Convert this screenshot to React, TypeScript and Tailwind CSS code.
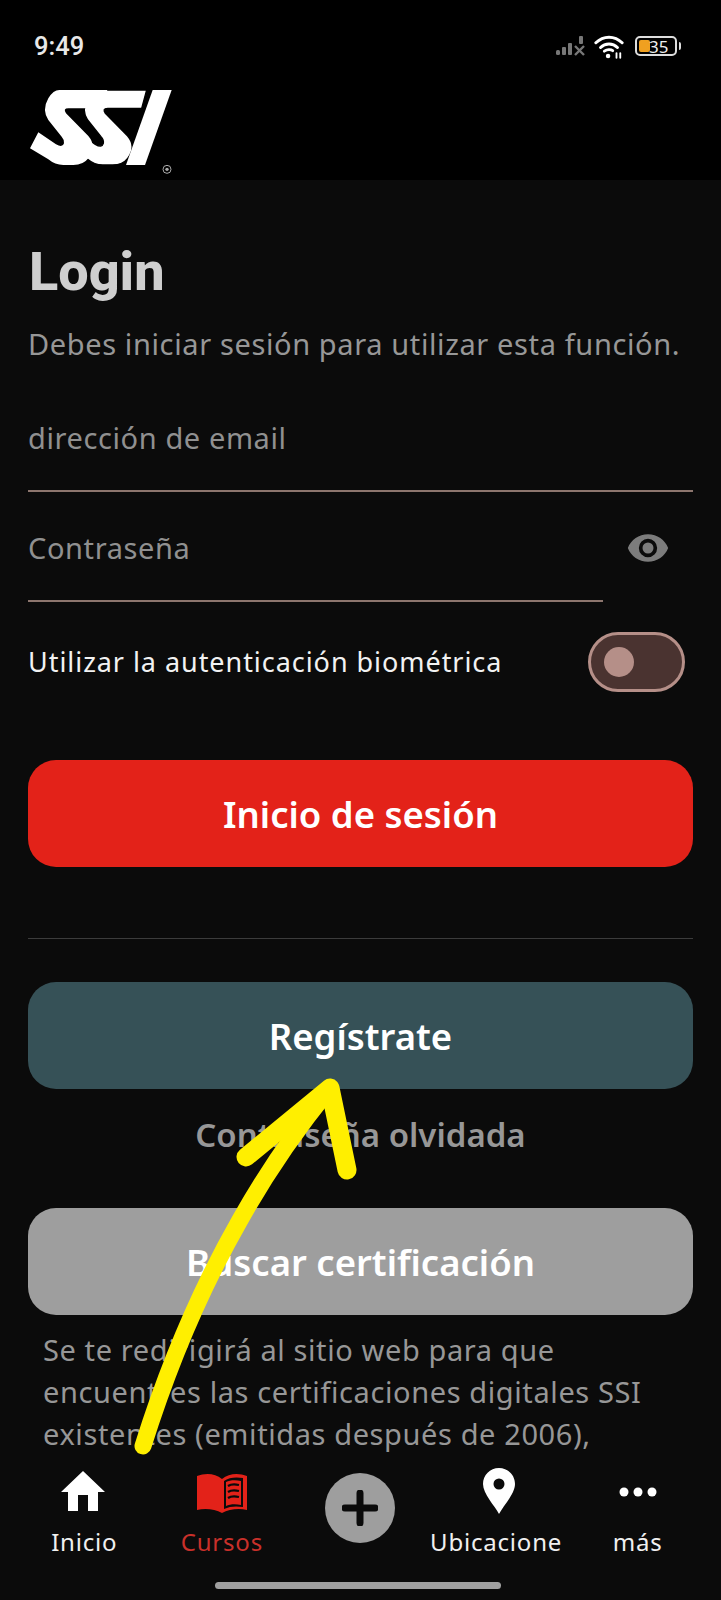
const S_PATH =
  "M118 30L262 30L247 85L145 85Q128 85 138 100L205 168Q232 200 205 235Q190 255 160 255L130 255Q105 255 85 238L30 205L55 157L108 193Q128 205 132 190Q134 180 125 170L85 120Q65 90 85 55Q100 30 118 30Z";

function SsiLogo() {
  return (
    <svg width="160" height="95" viewBox="0 0 480 285" className="absolute left-[20px] top-[80px]">
      <path d={S_PATH} fill="#fff" stroke="#000" strokeWidth="4" transform="translate(118 0)" />
      <path d={S_PATH} fill="#fff" />
      <path d="M398 30L455 30L375 255L318 255Z" fill="#fff" />
      <circle cx="441" cy="268" r="12" fill="none" stroke="#aaa" strokeWidth="3" />
      <circle cx="441" cy="268" r="5" fill="#aaa" />
    </svg>
  );
}

function StatusIcons() {
  return (
    <div className="flex items-center">
      <svg width="30" height="20" viewBox="0 0 30 20" className="mr-[9px]">
        <rect x="1" y="14" width="4" height="5" rx="1.5" fill="#777" />
        <rect x="7" y="11" width="4" height="8" rx="1" fill="#777" />
        <rect x="13" y="7" width="4" height="12" rx="1" fill="#777" />
        <rect x="24" y="0" width="4" height="8" rx="1" fill="#777" />
        <path d="M20 10L29 19M29 10L20 19" stroke="#777" strokeWidth="2.4" />
      </svg>
      <svg width="30" height="25" viewBox="0 0 32 26" fill="none" stroke="#fff" strokeLinecap="round" className="mr-[11px]">
        <path d="M2 9C10 1 22 1 30 9" strokeWidth="3.200" />
        <path d="M7 14C12 9 20 9 25 14" strokeWidth="3.200" />
        <path d="M11 18C14 16 18 16 20 17.500" strokeWidth="3" />
        <circle cx="15" cy="23" r="2.400" fill="#fff" stroke="none" />
        <path d="M24 20V25M28 20V25" strokeWidth="2" />
      </svg>
      <div className="flex items-center">
        <div className="relative flex h-[20px] w-[42px] items-center overflow-hidden rounded-[5px] border-2 border-[#ddd] pl-[2px]">
          <div className="h-[12px] w-[11px] rounded-[2px] bg-[#f0a020]" />
          <span className="absolute left-[12px] text-[17px] leading-none text-[#eee]">35</span>
        </div>
        <div className="ml-[2px] h-[8px] w-[2px] rounded-r bg-[#ddd]" />
      </div>
    </div>
  );
}

function Field({ label, short }: { label: string; short?: boolean }) {
  return (
    <div className="relative h-[110px]">
      <div className={"flex h-[109px] items-center border-b-2 border-[#8d766e] pt-[2px] " + (short ? "w-[575px]" : "w-full")}>
        <span className="text-[29px] tracking-[0.6px] text-[#909090]">{label}</span>
      </div>
      {short && (
        <svg width="44" height="44" viewBox="0 0 24 24" className="absolute right-[23px] top-[33px]" fill="#7c7c7c">
          <path d="M12 4.500C7 4.500 2.700 7.600 1 12c1.700 4.400 6 7.500 11 7.500s9.300-3.100 11-7.500c-1.700-4.400-6-7.500-11-7.500zM12 17a5 5 0 1 1 0-10 5 5 0 0 1 0 10zm0-8a3 3 0 1 0 0 6 3 3 0 0 0 0-6z" />
        </svg>
      )}
    </div>
  );
}

function BigButton({ label, color }: { label: string; color: string }) {
  return (
    <button className={"flex h-[107px] w-full items-center justify-center rounded-[28px] pt-[1px] text-[36.500px] font-semibold text-white " + color}>
      {label}
    </button>
  );
}

function NavItem({ label, children, active, labelClass }: { label: string; children: React.ReactNode; active?: boolean; labelClass?: string }) {
  return (
    <div className="flex min-w-0 flex-col items-center">
      <div className="flex h-[64px] items-center justify-center">{children}</div>
      <span className={"w-full overflow-hidden whitespace-nowrap text-center text-[24px] leading-[32px] tracking-[0.8px] " + (active ? "text-[#c9302a] " : "text-[#f0f0f0] ") + (labelClass ?? "")}>
        {label}
      </span>
    </div>
  );
}

export default function App() {
  return (
    <div
      className="relative flex h-[1600px] w-[721px] flex-col overflow-hidden bg-[#0b0b0b]"
      style={{ fontFamily: '"Noto Sans", sans-serif' }}
    >
      <header className="relative h-[180px] shrink-0 bg-black">
        <div className="flex items-center justify-between pl-[34px] pr-[40px] pt-[30px]">
          <span className="text-[25.500px] font-medium leading-[32px] text-[#e8e8e8]" style={{ fontFamily: "Roboto, sans-serif" }}>
            9:49
          </span>
          <StatusIcons />
        </div>
        <SsiLogo />
      </header>

      <main className="min-h-0 flex-1 overflow-hidden px-[28px]">
        <h1 className="mt-[60px] pl-[1px] text-[54px] font-extrabold leading-[64px] text-[#cfcfcf]" style={{ fontFamily: "Roboto, sans-serif" }}>
          Login
        </h1>
        <p className="mt-[20px] whitespace-nowrap text-[29px] leading-[40px] tracking-[0.62px] text-[#979797]">
          Debes iniciar sesión para utilizar esta función.
        </p>
        <div className="mt-[19px]">
          <Field label="dirección de email" />
          <Field label="Contraseña" short />
        </div>
        <div className="mt-[29px] flex items-center justify-between pr-[8px]">
          <span className="text-[27px] tracking-[0.95px] text-[#f2f2f2]">Utilizar la autenticación biométrica</span>
          <div className="flex h-[60px] w-[97px] items-center rounded-full border-[3px] border-[#b58f88] bg-[#4a3330] pl-[13px]">
            <div className="h-[30px] w-[30px] rounded-full bg-[#b58f88]" />
          </div>
        </div>
        <div className="mt-[68px]">
          <BigButton label="Inicio de sesión" color="bg-[#e32219]" />
        </div>
        <div className="mt-[71px] h-px bg-[#3c3c3c]" />
        <div className="mt-[43px]">
          <BigButton label="Regístrate" color="bg-[#365157]" />
        </div>
        <p className="mt-[22px] text-center text-[33px] font-semibold leading-[48px] text-[#979797]">Contraseña olvidada</p>
        <div className="mt-[49px]">
          <BigButton label="Buscar certificación" color="bg-[#9e9e9e]" />
        </div>
        <p className="mt-[14px] whitespace-nowrap pl-[15px] text-[29px] leading-[42px] tracking-[0.6px] text-[#979797]">
          Se te redirigirá al sitio web para que
          <br />
          encuentres las certificaciones digitales SSI
          <br />
          existentes (emitidas después de 2006),
        </p>
      </main>

      <nav className="h-[145px] shrink-0 bg-[#0b0b0b]">
        <div className="grid grid-cols-5 px-[14px] pt-[7px]">
          <NavItem label="Inicio" labelClass="pl-[2px]">
            <svg width="44" height="40" viewBox="0 0 44 40" fill="#fff" className="mb-[7px]">
              <path d="M22 0L44 21H37V40H27V24H17V40H7V21H0Z" />
            </svg>
          </NavItem>
          <NavItem label="Cursos" active>
            <svg width="50" height="40" viewBox="0 0 50 40">
              <path d="M0 2C8-1 18-1 25 5C32-1 42-1 50 2V36C42 34 32 35 25 39C18 35 8 34 0 36Z" fill="#e32219" />
              <path d="M27 7C32 3 40 3 46 4V33C40 32 33 32 27 35Z" fill="#0b0b0b" />
              <path d="M29 8C33 6 39 6 44 7V31C39 30 33 30 29 32Z" fill="#e32219" />
              <path d="M31 12C34 10 38 10 42 11M31 18C34 16 38 16 42 17M31 24C34 22 38 22 42 23" fill="none" stroke="#0b0b0b" strokeWidth="2.200" />
            </svg>
          </NavItem>
          <div className="flex items-start justify-center pt-[11px]">
            <div className="flex h-[70px] w-[70px] items-center justify-center rounded-full bg-[#9e9e9e]">
              <svg width="36" height="36" viewBox="0 0 36 36" stroke="#0b0b0b" strokeWidth="7" strokeLinecap="round">
                <path d="M18 3V33M3 18H33" />
              </svg>
            </div>
          </div>
          <NavItem label="Ubicacione" labelClass="pr-[6px]">
            <svg width="32" height="46" viewBox="0 0 32 46" className="mb-[6px]">
              <path fillRule="evenodd" fill="#fff" d="M16 0C7 0 0 7 0 16C0 26 12 38 16 46C20 38 32 26 32 16C32 7 25 0 16 0ZM16 10.500A5.500 5.500 0 1 1 16 21.500A5.500 5.500 0 1 1 16 10.500Z" />
            </svg>
          </NavItem>
          <NavItem label="más">
            <svg width="38" height="10" viewBox="0 0 38 10" fill="#fff" className="mb-[4px]">
              <circle cx="5" cy="5" r="4.500" />
              <circle cx="19" cy="5" r="4.500" />
              <circle cx="33" cy="5" r="4.500" />
            </svg>
          </NavItem>
        </div>
        <div className="ml-[215px] mt-[24px] h-[7px] w-[286px] rounded-full bg-[#a0a0a0]" />
      </nav>

      <svg width="721" height="1600" viewBox="0 0 721 1600" fill="none" className="pointer-events-none absolute left-0 top-0">
        <path d="M143 1446C170 1360 200 1290 240 1220C268 1170 300 1125 330 1088" stroke="#ffef00" strokeWidth="17" strokeLinecap="round" />
        <path d="M246 1157L330 1088L347 1170" stroke="#ffef00" strokeWidth="19" strokeLinecap="round" strokeLinejoin="round" />
      </svg>
    </div>
  );
}
